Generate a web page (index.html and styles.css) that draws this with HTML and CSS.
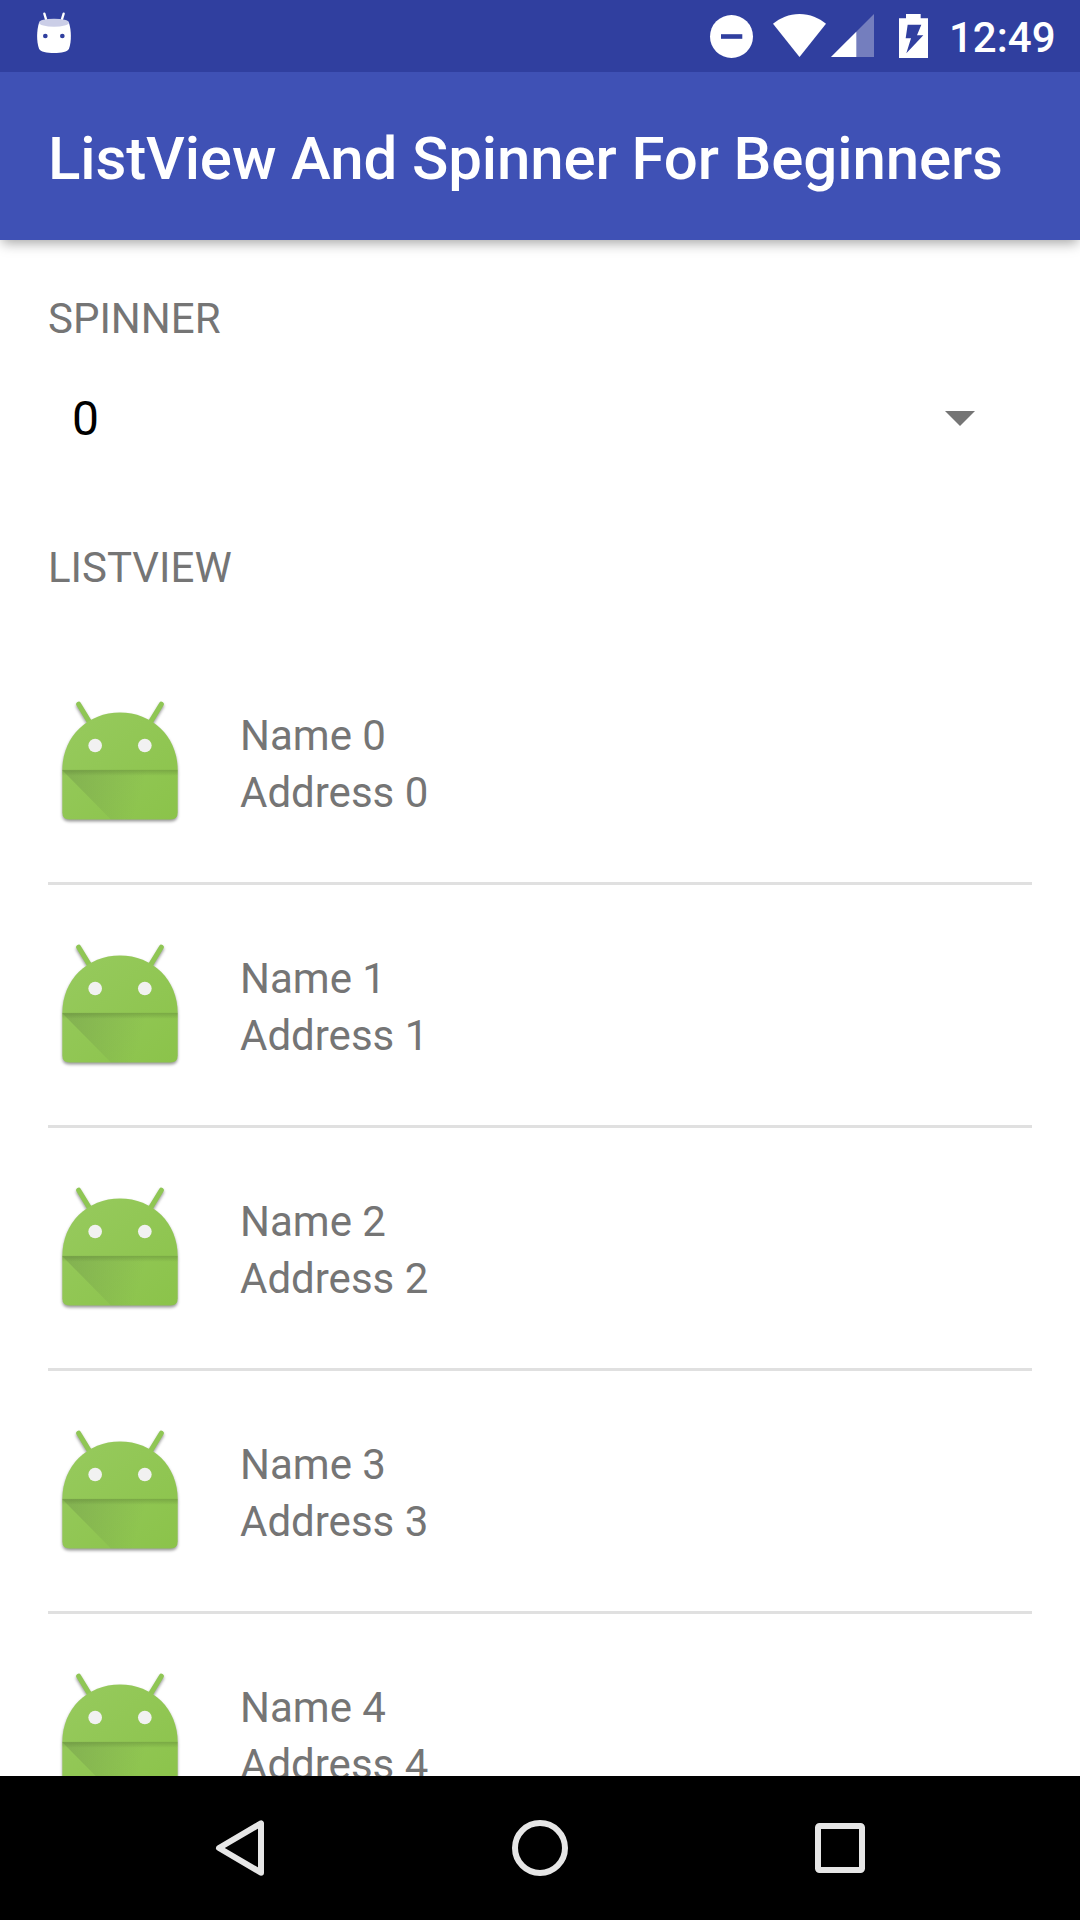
FILE: index.html
```
<!DOCTYPE html>
<html lang="en">
<head>
<meta charset="utf-8">
<title>ListView And Spinner For Beginners</title>
<link rel="stylesheet" href="styles.css">
</head>
<body>
<svg class="defs" aria-hidden="true">
  <defs>
    <linearGradient id="skin" x1="0" y1="0" x2="1" y2="1">
      <stop offset="0" stop-color="#97ca5e"/>
      <stop offset="1" stop-color="#8bc34a"/>
    </linearGradient>
    <linearGradient id="cast" gradientUnits="userSpaceOnUse" x1="90" y1="290" x2="300" y2="350">
      <stop offset="0" stop-color="#5d7d42" stop-opacity=".28"/>
      <stop offset="1" stop-color="#5d7d42" stop-opacity="0"/>
    </linearGradient>
    <linearGradient id="seam" x1="0" y1="0" x2="0" y2="1">
      <stop offset="0" stop-color="#4c6b2c" stop-opacity=".32"/>
      <stop offset="1" stop-color="#4c6b2c" stop-opacity="0"/>
    </linearGradient>
    <symbol id="android" viewBox="0 0 144 144">
      <g transform="translate(-8 -9.800) scale(.33333)">
        <g class="droid-antenna">
          <path d="M116 72L150 128"/>
          <path d="M364 72L330 128"/>
        </g>
        <path fill="url(#skin)" d="M67 270C67 170 142 97 240 97S413 170 413 270V397Q413 418 392 418H88Q67 418 67 397Z"/>
        <path fill="url(#cast)" d="M67 270H413V397Q413 418 392 418H213Z"/>
        <rect fill="url(#seam)" x="67" y="269" width="346" height="18"/>
        <circle cx="165.500" cy="196" r="20.500" fill="#f1f1f1"/>
        <circle cx="314.500" cy="196" r="20.500" fill="#f1f1f1"/>
      </g>
    </symbol>
  </defs>
</svg>

<div class="screen">
  <header class="status-bar">
    <svg class="notification" viewBox="105 36 114 126">
      <path d="M133 41L140 64M191 41L184 64" stroke="#fff" stroke-width="7" stroke-linecap="round"/>
      <path fill="#fff" d="M117 68H207C214 90 215 124 207 146C203 155 184 159 162 159S121 155 117 146C109 124 110 90 117 68Z"/>
      <ellipse cx="162" cy="68" rx="45" ry="12" fill="#cbcee7"/>
      <circle cx="136" cy="108" r="7" fill="#303f9f"/>
      <circle cx="187" cy="108" r="7" fill="#303f9f"/>
    </svg>
    <div class="indicators">
      <svg class="dnd" viewBox="0 0 43 43">
        <circle cx="21.500" cy="21.500" r="21.500" fill="#fff"/>
        <rect x="11" y="19.200" width="21.300" height="4.600" fill="#303f9f"/>
      </svg>
      <svg class="wifi" viewBox="0 0 53 43">
        <path fill="#fff" d="M0 9.700C7 4 16 0 26.500 0S46 4 53 9.700L26.500 43Z"/>
      </svg>
      <svg class="signal" viewBox="0 0 43 43">
        <path fill="#fff" fill-opacity=".33" d="M43 0V43H0Z"/>
        <path fill="#fff" d="M25.300 17.700V43H0Z"/>
      </svg>
      <svg class="battery" viewBox="627 42 87 132">
        <path fill="#fff" d="M648 42H692V55H714V174H627V55H648Z"/>
        <path fill="#303f9f" d="M653 74H694L681 106H700L649 160L663 115H647Z"/>
      </svg>
      <span class="clock">12:49</span>
    </div>
  </header>

  <div class="app-bar"><h1 class="title">ListView And Spinner For Beginners</h1></div>

  <main class="content">
    <h2 class="label">SPINNER</h2>
    <div class="spinner">
      <span class="value">0</span>
      <svg class="caret" viewBox="0 0 30 15"><path fill="#757575" d="M0 0H30L15 15Z"/></svg>
    </div>
    <h2 class="label label-list">LISTVIEW</h2>
    <ul class="list">
      <li class="row"><svg class="avatar"><use href="#android"/></svg><div class="text"><div>Name 0</div><div>Address 0</div></div></li>
      <li class="row"><svg class="avatar"><use href="#android"/></svg><div class="text"><div>Name 1</div><div>Address 1</div></div></li>
      <li class="row"><svg class="avatar"><use href="#android"/></svg><div class="text"><div>Name 2</div><div>Address 2</div></div></li>
      <li class="row"><svg class="avatar"><use href="#android"/></svg><div class="text"><div>Name 3</div><div>Address 3</div></div></li>
      <li class="row"><svg class="avatar"><use href="#android"/></svg><div class="text"><div>Name 4</div><div>Address 4</div></div></li>
    </ul>
  </main>

  <nav class="nav-bar">
    <svg class="nav-icon" viewBox="0 0 144 144"><path d="M51 72L93 47.300V96.700Z"/></svg>
    <svg class="nav-icon" viewBox="0 0 144 144"><circle cx="72" cy="72" r="25"/></svg>
    <svg class="nav-icon" viewBox="0 0 144 144"><rect x="50" y="50" width="44" height="44" rx="1.500"/></svg>
  </nav>
</div>
</body>
</html>
```
FILE: styles.css
```
* {
  box-sizing: border-box;
}

body {
  margin: 0;
  background: #fff;
  font-family: Roboto, "Noto Sans", sans-serif;
  color: #757575;
}

svg {
  display: block;
  flex: none;
  overflow: visible;
}

.defs {
  position: absolute;
  width: 0;
  height: 0;
}

.screen {
  display: flex;
  flex-direction: column;
  width: 1080px;
  height: 1920px;
  overflow: hidden;
}

.status-bar {
  z-index: 2;
  display: flex;
  justify-content: space-between;
  flex: none;
  height: 72px;
  padding: 0 25px 0 35px;
  background: #303f9f;
}

.notification {
  width: 38px;
  height: 42px;
  margin-top: 12px;
}

.indicators {
  display: flex;
  align-items: flex-start;
  padding-top: 14px;
}

.dnd {
  width: 43px;
  height: 43px;
  margin: 1px 20px 0 0;
}

.wifi {
  width: 53px;
  height: 43px;
  margin-right: 5px;
}

.signal {
  width: 43px;
  height: 43px;
  margin-right: 25px;
}

.battery {
  width: 29px;
  height: 44px;
}

.clock {
  width: 106px;
  margin-left: 21px;
  color: #fff;
  font-size: 42px;
  font-weight: 500;
  line-height: 48px;
}

.app-bar {
  z-index: 1;
  flex: none;
  height: 168px;
  padding: 3px 48px 0;
  background: #3f51b5;
  box-shadow: 0 5px 12px -2px rgba(0, 0, 0, .36);
}

.title {
  margin: 0;
  color: #fff;
  font-size: 60px;
  font-weight: 500;
  line-height: 168px;
  letter-spacing: -.12px;
  white-space: nowrap;
}

.content {
  flex: 1;
  min-height: 0;
  padding: 50px 48px 0;
  overflow: hidden;
}

.label {
  margin: 0;
  font-size: 42px;
  font-weight: 400;
  line-height: 57px;
}

.spinner {
  display: flex;
  align-items: center;
  justify-content: space-between;
  height: 144px;
  padding: 0 57px 0 24px;
}

.value {
  color: #000;
  font-size: 48px;
  line-height: 64px;
}

.caret {
  width: 30px;
  height: 15px;
  margin-bottom: 2px;
}

.label-list {
  margin-top: 48px;
}

.list {
  margin: 46px 0 0;
  padding: 0;
  list-style: none;
}

.row {
  display: flex;
  align-items: flex-start;
  gap: 48px;
  height: 243px;
  padding-top: 48px;
  border-bottom: 3px solid #e0e0e0;
}

.avatar {
  width: 144px;
  height: 144px;
  filter: drop-shadow(0 2px 1.500px rgba(0, 0, 0, .4));
}

.droid-antenna {
  fill: none;
  stroke: #8fc654;
  stroke-width: 15;
  stroke-linecap: round;
}

.text {
  padding-top: 17px;
  font-size: 42px;
  line-height: 57px;
}

.nav-bar {
  display: flex;
  flex: none;
  justify-content: center;
  gap: 156px;
  height: 144px;
  background: #000;
}

.nav-icon {
  width: 144px;
  height: 144px;
  fill: none;
  stroke: #e6e6e6;
  stroke-width: 6;
  stroke-linejoin: round;
}
```
